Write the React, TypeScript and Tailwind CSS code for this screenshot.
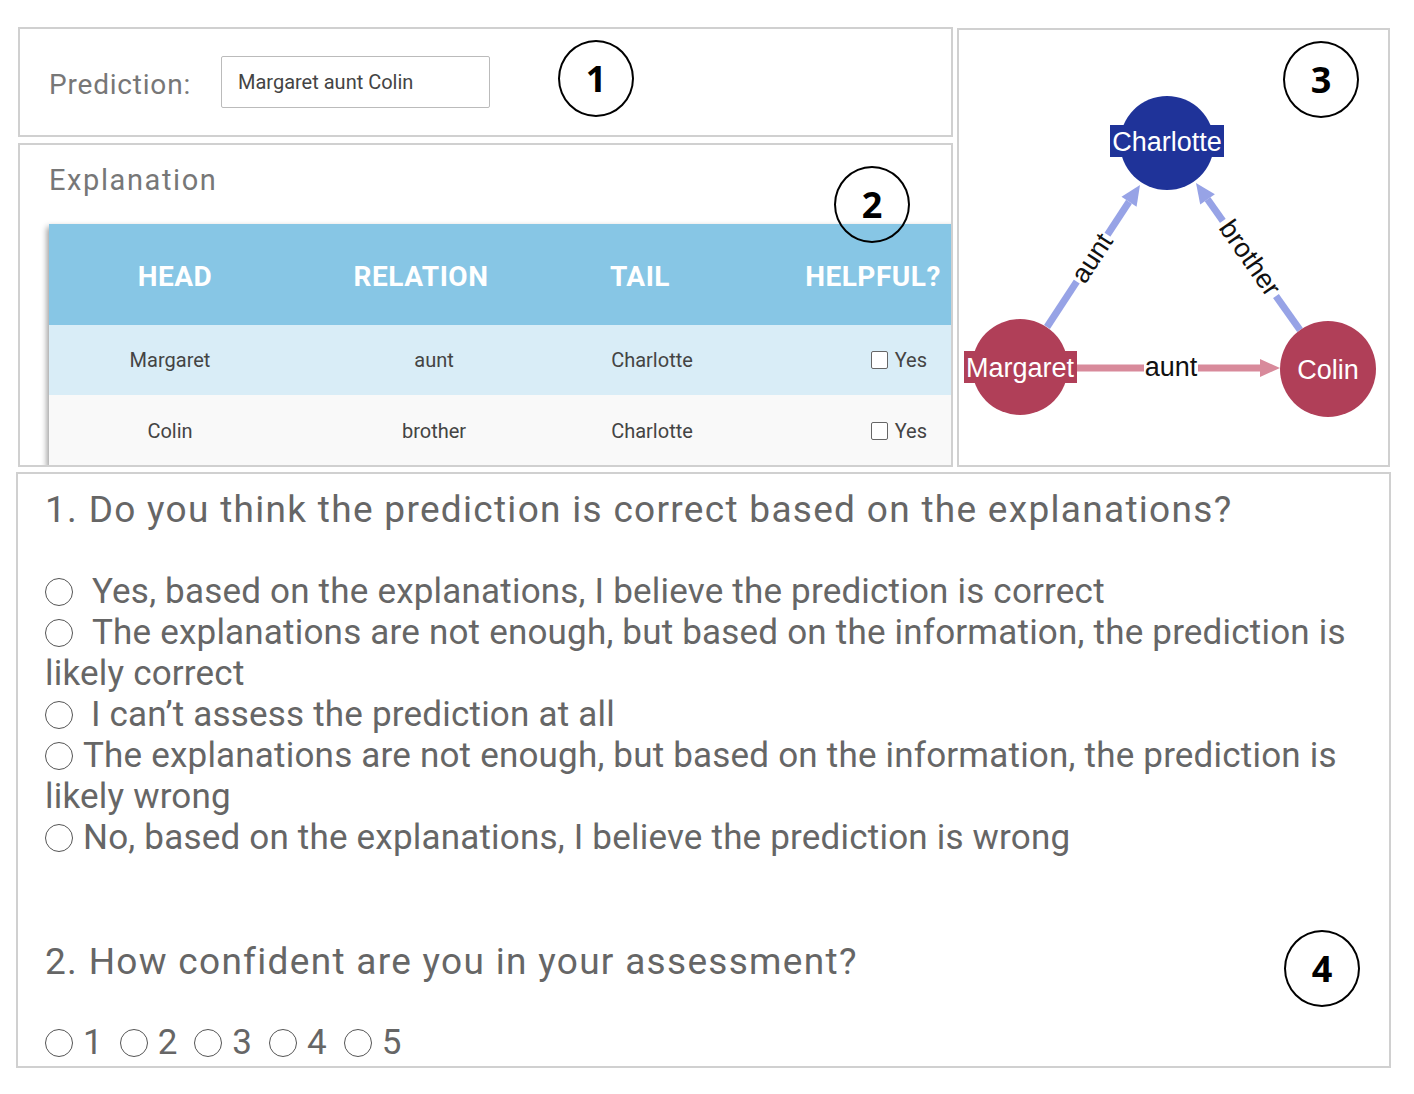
import React from "react";

const Badge = ({ n, className }: { n: string; className: string }) => (
  <div
    className={`absolute w-[76px] h-[77px] rounded-[50%] border-2 border-black flex items-center justify-center text-[36px] font-bold text-black leading-none ${className}`}
    style={{ fontFamily: '"Open Sans", sans-serif' }}
  >
    {n}
  </div>
);

const Radio = ({ className = "" }: { className?: string }) => (
  <span className={`inline-block w-[28px] h-[28px] rounded-full border-[1.5px] border-[#555] bg-white align-[-3px] ${className}`} />
);

function Arrow({ x1, y1, x2, y2, color }: { x1: number; y1: number; x2: number; y2: number; color: string }) {
  const dx = x2 - x1;
  const dy = y2 - y1;
  const len = Math.sqrt(dx * dx + dy * dy);
  const ux = dx / len;
  const uy = dy / len;
  const hl = 20;
  const hw = 9;
  const bx = x2 - ux * hl;
  const by = y2 - uy * hl;
  const px = -uy;
  const py = ux;
  const pts = `${x2},${y2} ${bx + px * hw},${by + py * hw} ${bx - px * hw},${by - py * hw}`;
  return (
    <g>
      <line x1={x1} y1={y1} x2={bx} y2={by} stroke={color} strokeWidth={7} />
      <polygon points={pts} fill={color} />
    </g>
  );
}

function Graph() {
  const blue = "#1f3399";
  const red = "#b03f58";
  const font = '"Liberation Sans", Arial, sans-serif';
  return (
    <svg width="429" height="435" viewBox="0 0 429 435" style={{ fontFamily: font }}>
      <Arrow x1={88} y1={297} x2={181} y2={155} color="#97a3e6" />
      <Arrow x1={341} y1={300} x2={237} y2={153} color="#97a3e6" />
      <Arrow x1={105} y1={338} x2={321} y2={338} color="#d88a9b" />
      <circle cx={208} cy={113} r={47} fill={blue} />
      <circle cx={61} cy={337} r={48} fill={red} />
      <circle cx={369} cy={339} r={48} fill={red} />
      <rect x={151} y={95} width={114} height={32} fill={blue} />
      <text x={208} y={121} textAnchor="middle" fontSize={27} fill="#ffffff">Charlotte</text>
      <rect x={5} y={321} width={113} height={32} fill={red} />
      <text x={61} y={347} textAnchor="middle" fontSize={27} fill="#ffffff">Margaret</text>
      <text x={369} y={349} textAnchor="middle" fontSize={27} fill="#ffffff">Colin</text>
      <rect x={185} y={324} width={54} height={26} fill="#ffffff" />
      <text x={212} y={346} textAnchor="middle" fontSize={27} fill="#111">aunt</text>
      <g transform="translate(133 228) rotate(-56.5)">
        <rect x={-28} y={-13} width={56} height={24} fill="#ffffff" />
        <text x={0} y={9} textAnchor="middle" fontSize={27} fill="#111">aunt</text>
      </g>
      <g transform="translate(291 228) rotate(55)">
        <rect x={-46} y={-13} width={92} height={24} fill="#ffffff" />
        <text x={0} y={9} textAnchor="middle" fontSize={27} fill="#111">brother</text>
      </g>
    </svg>
  );
}

export default function App() {
  const roboto = { fontFamily: 'Roboto, "Noto Sans", sans-serif' };
  return (
    <div className="w-[1414px] h-[1094px] bg-white relative" style={roboto}>
      <div className="pt-[27px] pl-[18px] flex gap-[4px]">
        <div className="flex flex-col gap-[6px] w-[935px]">
          <div className="relative h-[110px] border-2 border-[#d0d0d0] flex items-center pl-[29px]">
            <span className="text-[28px] tracking-[0.8px] text-[#777] mt-[6px]">Prediction:</span>
            <div className="ml-[30px] w-[269px] h-[52px] border-[1.5px] border-[#bbb] rounded-[2px] flex items-center pl-[16px] text-[20px] text-[#444]">
              Margaret aunt Colin
            </div>
            <Badge n="1" className="left-[538px] top-[11px]" />
          </div>
          <div className="relative h-[324px] border-2 border-[#d0d0d0] overflow-hidden">
            <div className="pl-[29px] pt-[16px] text-[29px] tracking-[1.6px] text-[#777] leading-[38px]">Explanation</div>
            <div className="absolute left-[29px] top-[79px] w-[910px] shadow-[-2px_3px_6px_rgba(0,0,0,0.4)]">
              <div className="h-[101px] pt-[5px] bg-[#87c6e5] flex items-center text-white font-bold text-[28px] tracking-[0.5px]">
                <div className="w-[252px] shrink-0 text-center">HEAD</div>
                <div className="w-[240px] shrink-0 text-center">RELATION</div>
                <div className="w-[198px] shrink-0 text-center">TAIL</div>
                <div className="w-[268px] shrink-0 text-center">HELPFUL?</div>
              </div>
              <div className="h-[70px] bg-[#d9edf7] flex items-center text-[20px] text-[#444]">
                <div className="w-[242px] shrink-0 text-center">Margaret</div>
                <div className="w-[286px] shrink-0 text-center">aunt</div>
                <div className="w-[150px] shrink-0 text-center">Charlotte</div>
                <div className="w-[200px] shrink-0 flex justify-end items-center gap-[7px]">
                  <span className="inline-block w-[17px] h-[18px] border border-[#666] rounded-[2px] bg-white" />
                  <span>Yes</span>
                </div>
              </div>
              <div className="h-[71px] bg-[#f9f9f9] flex items-center text-[20px] text-[#444]">
                <div className="w-[242px] shrink-0 text-center">Colin</div>
                <div className="w-[286px] shrink-0 text-center">brother</div>
                <div className="w-[150px] shrink-0 text-center">Charlotte</div>
                <div className="w-[200px] shrink-0 flex justify-end items-center gap-[7px]">
                  <span className="inline-block w-[17px] h-[18px] border border-[#666] rounded-[2px] bg-white" />
                  <span>Yes</span>
                </div>
              </div>
            </div>
          </div>
        </div>
        <div className="relative mt-[1px] w-[433px] h-[439px] border-2 border-[#d0d0d0]">
          <Graph />
          <Badge n="3" className="left-[324px] top-[11px]" />
        </div>
      </div>
      <div className="relative ml-[16px] mt-[5px] w-[1375px] h-[596px] border-2 border-[#d0d0d0] pl-[27px] pt-[14px] text-[#666]">
        <div className="text-[37px] tracking-[1.3px] leading-[44px]">1. Do you think the prediction is correct based on the explanations?</div>
        <div className="mt-[39px] text-[35px] tracking-[0.2px] leading-[41px] pr-[20px]">
          <p><Radio className="mr-[19px]" />Yes, based on the explanations, I believe the prediction is correct</p>
          <p><Radio className="mr-[19px]" />The explanations are not enough, but based on the information, the prediction is likely correct</p>
          <p><Radio className="mr-[18px]" />I can’t assess the prediction at all</p>
          <p><Radio className="mr-[10px]" />The explanations are not enough, but based on the information, the prediction is likely wrong</p>
          <p><Radio className="mr-[10px]" />No, based on the explanations, I believe the prediction is wrong</p>
        </div>
        <div className="mt-[82px] text-[37px] tracking-[1.3px] leading-[44px]">2. How confident are you in your assessment?</div>
        <div className="mt-[38px] text-[35px] leading-[41px] flex gap-[17px]">
          {["1", "2", "3", "4", "5"].map((n) => (
            <span key={n} className="flex items-center">
              <Radio className="mr-[10px]" />
              {n}
            </span>
          ))}
        </div>
        <Badge n="4" className="left-[1266px] top-[456px]" />
      </div>
      <Badge n="2" className="left-[834px] top-[166px]" />
    </div>
  );
}
